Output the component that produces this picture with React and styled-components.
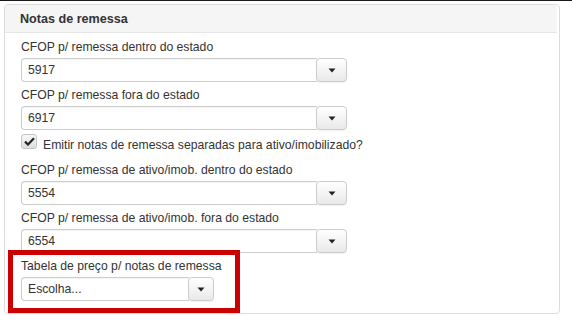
import React from "react";
import styled, { createGlobalStyle } from "styled-components";

const Global = createGlobalStyle`
  html, body { margin: 0; padding: 0; background: #fff; }
  body {
    font-family: "Liberation Sans", Arial, sans-serif;
    font-size: 12px;
    color: #333;
    border-top: 1px solid #1a1a1a;
  }
`;

const Page = styled.div`
  padding: 3px 12px 0 4px;
`;

const Panel = styled.section`
  width: 554px;
  border: 1px solid #dcdcdc;
  border-radius: 4px;
  background: #fff;
`;

const Heading = styled.header`
  height: 27px;
  margin-right: 2px;
  padding-left: 15px;
  display: flex;
  align-items: center;
  background: #f5f5f5;
  border-bottom: 1px solid #e6e6e6;
  border-radius: 4px 4px 0 0;
  font-weight: bold;
  font-size: 12.6px;
  color: #333;
`;

const Body = styled.div`
  padding: 5px 16px 8px 16px;
  display: flex;
  flex-direction: column;
`;

const Group = styled.div`
  position: relative;
  display: flex;
  flex-direction: column;
  margin-bottom: 4px;
`;

const Label = styled.label`
  height: 18px;
  line-height: 18px;
  margin-bottom: 2px;
  font-size: 12.2px;
  color: #333;
`;

const Select = styled.div`
  display: flex;
  width: ${(p) => p.$width}px;
  height: 24px;
`;

const Value = styled.div`
  flex: 1;
  display: flex;
  align-items: center;
  padding-left: 6px;
  border: 1px solid #ccc;
  border-right: none;
  border-radius: 4px 0 0 4px;
  background: #fff;
  color: #333;
  font-size: 12.2px;
  box-shadow: inset 0 1px 1px rgba(0, 0, 0, 0.04);
`;

const Toggle = styled.div`
  width: ${(p) => p.$width}px;
  display: flex;
  align-items: center;
  justify-content: center;
  border: 1px solid #ccc;
  border-radius: 4px;
  margin-left: -1px;
  background: linear-gradient(#fff, #e9e9e9);
  box-shadow: 0 1px 1px rgba(0, 0, 0, 0.06);
`;

const Caret = () => (
  <svg width="8" height="5" viewBox="0 0 8 5">
    <path d="M0.5 0.5 H7.5 L4 4.5 Z" fill="#222" />
  </svg>
);

const CheckRow = styled.div`
  display: flex;
  align-items: flex-start;
  height: 22px;
  margin-bottom: 5px;
  font-size: 12.2px;
`;

const CheckText = styled.span`
  line-height: 18px;
  padding-top: 2px;
`;

const CheckBox = styled.span`
  width: 14px;
  height: 13px;
  border: 1px solid #c4c4c4;
  border-radius: 3px;
  background: linear-gradient(#f7f7f7, #dedede);
  display: flex;
  align-items: center;
  justify-content: center;
  margin-right: 6px;
`;

const Highlight = styled.div`
  position: absolute;
  left: -13px;
  top: -7px;
  width: 222px;
  height: 53px;
  border: 5px solid #cc0000;
  pointer-events: none;
`;

const SelectField = ({ label, value, width = 326, btn = 29 }) => (
  <>
    <Label>{label}</Label>
    <Select $width={width}>
      <Value>{value}</Value>
      <Toggle $width={btn}>
        <Caret />
      </Toggle>
    </Select>
  </>
);

export default function App() {
  return (
    <>
      <Global />
      <Page>
        <Panel>
          <Heading>Notas de remessa</Heading>
          <Body>
            <Group>
              <SelectField label="CFOP p/ remessa dentro do estado" value="5917" />
            </Group>
            <Group>
              <SelectField label="CFOP p/ remessa fora do estado" value="6917" />
            </Group>
            <CheckRow>
              <CheckBox>
                <svg width="11" height="9" viewBox="0 0 11 9">
                  <path d="M1 4.6 L4 7.5 L10 1.3" fill="none" stroke="#222" strokeWidth="2.2" />
                </svg>
              </CheckBox>
              <CheckText>Emitir notas de remessa separadas para ativo/imobilizado?</CheckText>
            </CheckRow>
            <Group>
              <SelectField label="CFOP p/ remessa de ativo/imob. dentro do estado" value="5554" />
            </Group>
            <Group>
              <SelectField label="CFOP p/ remessa de ativo/imob. fora do estado" value="6554" />
            </Group>
            <Group>
              <SelectField
                label="Tabela de preço p/ notas de remessa"
                value="Escolha..."
                width={193}
                btn={24}
              />
              <Highlight />
            </Group>
          </Body>
        </Panel>
      </Page>
    </>
  );
}
